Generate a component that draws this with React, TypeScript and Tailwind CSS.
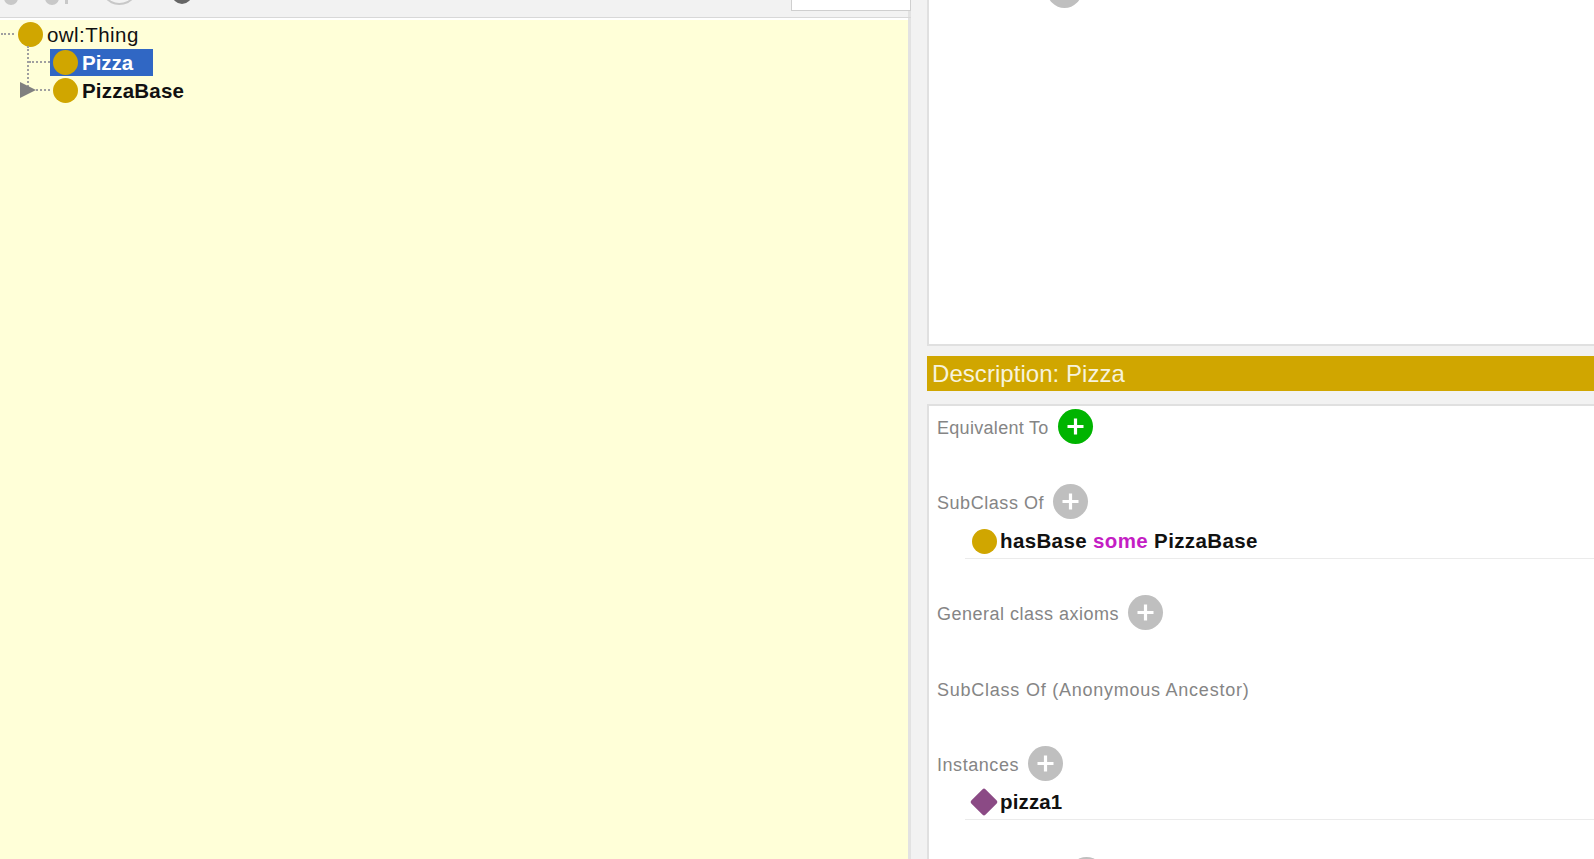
import React from "react";

const Dot = ({ className = "" }: { className?: string }) => (
  <span className={`block w-[25px] h-[25px] rounded-full bg-[#d0a600] shrink-0 ${className}`} />
);

const Plus = ({ green = false }: { green?: boolean }) => (
  <span className={`w-[35px] h-[35px] rounded-full flex items-center justify-center shrink-0 ${green ? "bg-[#00b400]" : "bg-[#bfbfbf]"}`}>
    <svg width="19" height="19" viewBox="0 0 19 19"><path d="M9.5 1.5v16M1.5 9.5h16" stroke="#fff" strokeWidth="3.2" /></svg>
  </span>
);

const Section = ({ label, plus, green, className = "", spacing = "" }: { label: string; plus?: boolean; green?: boolean; className?: string; spacing?: string }) => (
  <div className={`flex items-center h-[35px] text-[18px] text-[#858585] gap-[9px] ${className}`}>
    <span className={`pt-[4px] ${spacing}`}>{label}</span>
    {plus && <Plus green={green} />}
  </div>
);

export default function App() {
  return (
    <div className="w-[1594px] h-[859px] overflow-hidden bg-[#f2f2f2] flex font-['Liberation_Sans',Arial,sans-serif]">
      <div className="w-[911px] shrink-0 flex flex-col border-r-[3px] border-[#e2e2e2]">
        <div className="h-[18px] shrink-0 flex items-start relative border-b border-[#d8d8d8] -mr-[3px]">
          <svg width="210" height="17" viewBox="0 0 210 17" className="absolute left-0 top-0">
            <circle cx="11" cy="-2" r="7" fill="#c8c8c8" />
            <circle cx="52" cy="-2" r="7" fill="#c8c8c8" />
            <rect x="65" y="-2" width="3" height="6" fill="#c8c8c8" />
            <path d="M107 -1 L111 2 Q119 6 128 2 L132 -1" fill="none" stroke="#c8c8c8" strokeWidth="2" />
            <circle cx="182" cy="-6" r="10" fill="#666" />
          </svg>
          <div className="ml-auto w-[120px] h-[11px] bg-white border border-t-0 border-[#cfcfcf]" />
        </div>
        <div className="flex-1 relative bg-[#ffffd8] border-t-2 border-white text-[20.5px] leading-[28px] text-[#111]">
          <div className="flex items-center h-[28px]">
            <span className="w-[13px] ml-[1px] border-t-2 border-dotted border-[#a0a0a0]" />
            <Dot className="ml-[4px]" />
            <span className="ml-[4px] pt-[2px] tracking-[0.45px]">owl:Thing</span>
          </div>
          <div className="flex items-center h-[28px] ml-[50px]">
            <span className="flex items-center h-[27px] w-[103px] bg-[#3067c4] text-white font-bold pl-[3px]">
              <Dot />
              <span className="ml-[4px] pt-[2px]">Pizza</span>
            </span>
          </div>
          <div className="flex items-center h-[28px] ml-[53px]">
            <Dot />
            <span className="ml-[4px] pt-[2px] font-bold tracking-[0.2px]">PizzaBase</span>
          </div>
          <span className="absolute left-[27px] top-[26px] h-[44px] border-l-2 border-dotted border-[#a0a0a0]" />
          <span className="absolute left-[29px] top-[41px] w-[21px] border-t-2 border-dotted border-[#a0a0a0]" />
          <span className="absolute left-[36px] top-[69px] w-[14px] border-t-2 border-dotted border-[#a0a0a0]" />
          <span className="absolute left-[20px] top-[62px] w-0 h-0 border-y-[8px] border-y-transparent border-l-[16px] border-l-[#808080]" />
        </div>
      </div>
      <div className="flex-1 flex flex-col pl-[16px] min-w-0">
        <div className="h-[346px] shrink-0 bg-white border-l-2 border-b-2 border-[#e0e0e0] relative">
          <span className="absolute left-[118px] top-[-27px] w-[35px] h-[35px] rounded-full bg-[#bfbfbf]" />
        </div>
        <div className="h-[35px] shrink-0 mt-[10px] bg-[#d0a600] text-[#f7f3dc] text-[24px] leading-[35px] pl-[5px] tracking-[0.05px]">Description: Pizza</div>
        <div className="flex-1 mt-[13px] bg-white border-l-2 border-t-2 border-[#e0e0e0] pl-[8px] pt-[3px]">
          <Section label="Equivalent To" plus green spacing="tracking-[0.3px]" />
          <Section label="SubClass Of" plus className="mt-[40px]" spacing="tracking-[0.55px]" />
          <div className="flex items-center h-[34px] ml-[28px] mt-[6px] border-b border-[#ebebeb] text-[20.5px] font-bold text-[#111]">
            <Dot className="ml-[7px]" />
            <span className="ml-[3px] tracking-[0.37px]">hasBase <span className="text-[#c41dc4]">some</span> PizzaBase</span>
          </div>
          <Section label="General class axioms" plus className="mt-[36px]" spacing="tracking-[0.5px]" />
          <Section label="SubClass Of (Anonymous Ancestor)" className="mt-[41px]" spacing="tracking-[0.76px]" />
          <Section label="Instances" plus className="mt-[40px]" spacing="tracking-[0.55px]" />
          <div className="flex items-center h-[35px] ml-[28px] mt-[4px] border-b border-[#ebebeb] text-[20.5px] font-bold text-[#111]">
            <span className="block w-[20px] h-[20px] rotate-45 rounded-[2px] bg-[#8b4a85] ml-[9px] shrink-0" />
            <span className="ml-[6px] tracking-[0.15px]">pizza1</span>
          </div>
          <div className="relative">
            <span className="absolute left-[132px] top-[37px] w-[35px] h-[35px] rounded-full bg-[#bfbfbf]" />
          </div>
        </div>
      </div>
    </div>
  );
}
